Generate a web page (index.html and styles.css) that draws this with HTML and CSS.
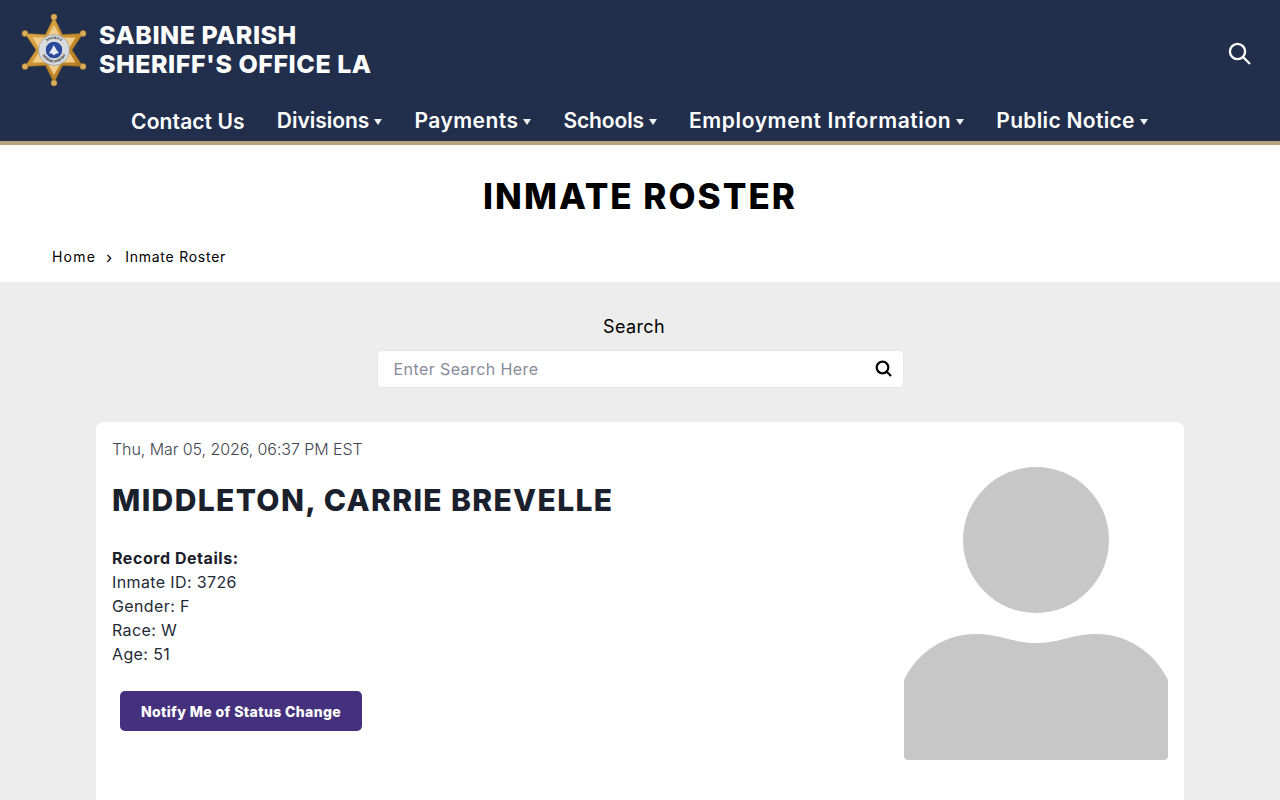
FILE: index.html
```html
<!DOCTYPE html>
<html lang="en">
<head>
<meta charset="utf-8">
<title>Inmate Roster</title>
<link rel="stylesheet" href="styles.css">
</head>
<body>
<header class="site-header">
  <div class="brand-row">
    <a class="brand">
      <svg class="badge" viewBox="-37 -37 74 74" aria-hidden="true">
        <defs>
          <linearGradient id="gold" x1="0" y1="0" x2="1" y2="1">
            <stop offset="0" stop-color="#e8b65a"/><stop offset=".5" stop-color="#c98f2e"/><stop offset="1" stop-color="#a9711f"/>
          </linearGradient>
          <path id="arcTop" d="M-11 0A11 11 0 0 1 11 0"/>
          <path id="arcBot" d="M-12.600 0A12.600 12.600 0 0 0 12.600 0"/>
        </defs>
        <polygon fill="url(#gold)" stroke="#8a6424" stroke-width=".6" points="0,-33 8.500,-15.500 29,-16.500 18,0 29,16.500 8.500,15.500 0,33 -8.500,15.500 -29,16.500 -18,0 -29,-16.500 -8.500,-15.500"/>
        <polygon fill="#f0cd8c" points="0,-25 7,-12.500 21.500,-12.500 14,0 21.500,12.500 7,12.500 0,25 -7,12.500 -21.500,12.500 -14,0 -21.500,-12.500 -7,-12.500"/>
        <g fill="#dcae5c" stroke="#a87a2c" stroke-width=".5">
          <circle cx="0" cy="-33" r="3"/><circle cx="29" cy="-16.500" r="3"/><circle cx="29" cy="16.500" r="3"/>
          <circle cx="0" cy="33" r="3"/><circle cx="-29" cy="16.500" r="3"/><circle cx="-29" cy="-16.500" r="3"/>
        </g>
        <circle r="15.500" fill="#d9dadb" stroke="#8d8f92" stroke-width=".6"/>
        <text class="badge-text"><textPath href="#arcTop" startOffset="50%" text-anchor="middle">SHERIFF</textPath></text>
        <text class="badge-text"><textPath href="#arcBot" startOffset="50%" text-anchor="middle">SABINE PARISH</textPath></text>
        <circle r="8.800" fill="#2c4a9a" stroke="#f2f2f2" stroke-width=".8"/>
        <path fill="#e8ecf5" d="M-5 3.500C-3.500 .5-2 -1-.2-5 1.500-1 3.500.5 5 3.500 2.500 2.500 1 4.500 0 5.500-1 4.500-2.500 2.500-5 3.500Z"/>
      </svg>
      <span class="brand-name">SABINE PARISH<br>SHERIFF'S OFFICE LA</span>
    </a>
    <svg class="top-search" viewBox="0 0 24 24" aria-hidden="true">
      <circle cx="9.500" cy="9.500" r="7.600"/><path d="M15 15 22 22"/>
    </svg>
  </div>
  <nav class="main-nav">
    <a class="nav-link contact">Contact Us</a>
    <a class="nav-link divisions">Divisions<i class="caret"></i></a>
    <a class="nav-link payments">Payments<i class="caret"></i></a>
    <a class="nav-link schools">Schools<i class="caret"></i></a>
    <a class="nav-link employment">Employment Information<i class="caret"></i></a>
    <a class="nav-link notice">Public Notice<i class="caret"></i></a>
  </nav>
</header>

<section class="title-band">
  <h1>INMATE ROSTER</h1>
  <div class="crumbs"><a class="crumb-home">Home</a><span class="crumb-sep">›</span><span class="crumb-current">Inmate Roster</span></div>
</section>

<main class="content">
  <div class="search-block">
    <label class="search-label" for="q">Search</label>
    <div class="search-box">
      <input id="q" type="text" placeholder="Enter Search Here">
      <svg class="box-icon" viewBox="0 0 18 18" aria-hidden="true"><circle cx="7.500" cy="7.500" r="5.800"/><path d="M11.800 11.800 16 16"/></svg>
    </div>
  </div>

  <article class="card">
    <div class="record">
      <p class="stamp">Thu, Mar 05, 2026, 06:37 PM EST</p>
      <h2>MIDDLETON, CARRIE BREVELLE</h2>
      <div class="details">
        <strong>Record Details:</strong>
        <div>Inmate ID: 3726</div>
        <div>Gender: F</div>
        <div>Race: W</div>
        <div>Age: 51</div>
      </div>
      <button class="notify" type="button">Notify Me of Status Change</button>
    </div>
    <svg class="avatar" viewBox="0 0 264 295" aria-hidden="true">
      <circle cx="132" cy="73" r="73"/>
      <path d="M0 213C14 184 42 167 72 167 96 167 108 176 132 176 156 176 168 167 192 167 222 167 250 184 264 213V289Q264 293 259 293H5Q0 293 0 289Z"/>
    </svg>
  </article>
</main>
</body>
</html>
```
FILE: styles.css
```css
* { box-sizing: border-box; }
html, body { margin: 0; height: 800px; overflow: hidden; }
body { background: #ededed; font-family: Inter, "Liberation Sans", sans-serif; color: #1a202c; }

.site-header { height: 145px; background: #212f4d; border-bottom: 4px solid #b5a47e; color: #fff; }
.brand-row { display: flex; justify-content: space-between; align-items: flex-start; padding: 13px 28px 0 17px; height: 107px; }
.brand { display: flex; align-items: center; gap: 8px; }
.badge { width: 74px; height: 74px; }
.badge-text { font-size: 3.600px; font-weight: 700; fill: #33373d; letter-spacing: .15px; }
.brand-name { font-size: 25px; line-height: 29px; font-weight: 800; letter-spacing: .52px; }
.top-search { width: 24px; height: 24px; margin-top: 29px; fill: none; stroke: #fff; stroke-width: 2.300; }

.main-nav { display: flex; justify-content: center; align-items: center; gap: 32px; padding-right: 1px; }
.nav-link { font-size: 21px; line-height: 26px; font-weight: 600; white-space: nowrap; display: flex; align-items: center; }
.contact { margin-top: 2px; letter-spacing: .1px; }
.divisions { letter-spacing: 0; }
.payments { letter-spacing: .45px; }
.schools { letter-spacing: -.1px; }
.employment { letter-spacing: .6px; }
.notice { letter-spacing: .33px; }
.caret { width: 0; height: 0; margin: 2px 0 0 5px; border-left: 4px solid transparent; border-right: 4px solid transparent; border-top: 6px solid #f0f0f0; }

.title-band { height: 137px; background: #fff; padding-top: 29px; color: #000; }
h1 { margin: 0; text-align: center; font-size: 35px; line-height: 44px; font-weight: 800; letter-spacing: 2px; }
.crumbs { display: flex; align-items: center; margin-top: 29px; padding-left: 52px; font-size: 14px; line-height: 20px; }
.crumb-home { letter-spacing: 1.200px; }
.crumb-sep { margin: 0 13px 0 10px; font-size: 16px; }
.crumb-current { letter-spacing: .75px; }

.content { padding: 32px 96px 0; }
.search-block { display: flex; flex-direction: column; align-items: center; }
.search-label { font-size: 18px; line-height: 26px; color: #000; letter-spacing: .35px; margin: 0 12px 10px 0; }
.search-box { width: 527px; height: 38px; display: flex; align-items: center; background: #fff; border: 1px solid #e6e6e6; border-radius: 5px; padding: 0 10px 0 16px; }
.search-box input { flex: 1; min-width: 0; border: 0; outline: 0; background: transparent; font: 400 16px Inter, "Liberation Sans", sans-serif; letter-spacing: .42px; color: #000; padding: 0; }
.search-box input::placeholder { color: #878b99; opacity: 1; }
.box-icon { width: 18px; height: 18px; fill: none; stroke: #000; stroke-width: 2.200; }

.card { display: flex; justify-content: space-between; margin-top: 34px; height: 480px; background: #fff; border-radius: 8px; padding: 16px; }
.record { flex: 1; }
.stamp { margin: 0; font-size: 16px; line-height: 22px; font-weight: 300; color: #3f4650; letter-spacing: -.08px; }
h2 { margin: 18px 0 0; font-size: 30px; line-height: 44px; font-weight: 800; letter-spacing: 1.360px; color: #1a202c; }
.details { margin-top: 24px; font-size: 16px; line-height: 24px; font-weight: 400; letter-spacing: .38px; color: #252b36; }
.details strong { display: block; font-weight: 700; color: #1a202c; letter-spacing: .55px; }
.notify { display: block; margin: 25px 0 0 8px; width: 242px; height: 40px; border: 0; border-radius: 5px; background: #44307d; color: #fff; font: 800 14px Inter, "Liberation Sans", sans-serif; letter-spacing: .38px; }
.avatar { width: 264px; height: 295px; margin-top: 29px; fill: #c7c7c7; flex: none; filter: blur(.5px); }
```
